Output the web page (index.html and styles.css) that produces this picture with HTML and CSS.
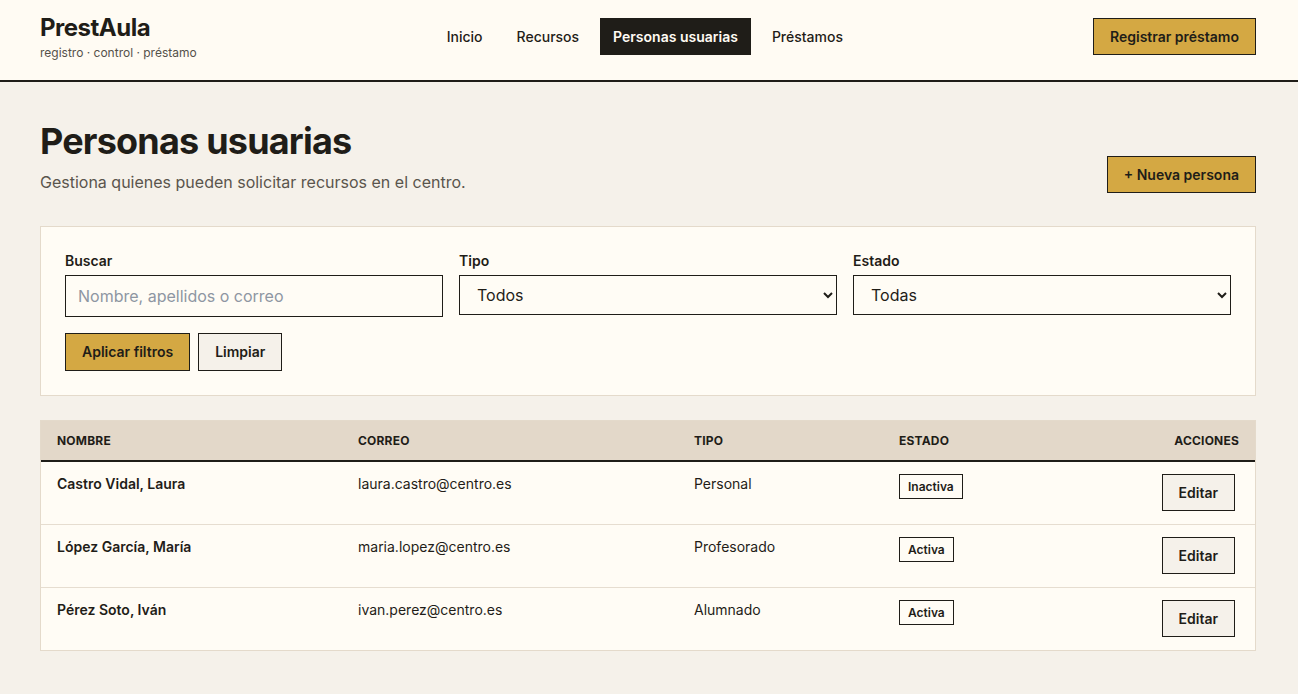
FILE: index.html
```html
<!DOCTYPE html>
<html lang="es">
<head>
<meta charset="utf-8">
<title>PrestAula · Personas usuarias</title>
<link rel="stylesheet" href="styles.css">
</head>
<body>
<header class="topbar">
  <div class="brand">
    <div class="brand-name">PrestAula</div>
    <div class="brand-sub">registro · control · préstamo</div>
  </div>
  <nav class="nav">
    <a class="nav-link" href="#">Inicio</a>
    <a class="nav-link" href="#">Recursos</a>
    <a class="nav-link active" href="#">Personas usuarias</a>
    <a class="nav-link" href="#">Préstamos</a>
  </nav>
  <button class="btn btn-primary">Registrar préstamo</button>
</header>

<main class="main">
  <section class="page-head">
    <div>
      <h1 class="page-title">Personas usuarias</h1>
      <p class="page-desc">Gestiona quienes pueden solicitar recursos en el centro.</p>
    </div>
    <button class="btn btn-primary">+ Nueva persona</button>
  </section>

  <section class="filters">
    <div class="filter-grid">
      <label class="field">
        <span class="field-label">Buscar</span>
        <input class="input" type="text" placeholder="Nombre, apellidos o correo">
      </label>
      <label class="field">
        <span class="field-label">Tipo</span>
        <select class="select"><option>Todos</option></select>
      </label>
      <label class="field">
        <span class="field-label">Estado</span>
        <select class="select"><option>Todas</option></select>
      </label>
    </div>
    <div class="filter-actions">
      <button class="btn btn-primary btn-md">Aplicar filtros</button>
      <button class="btn btn-secondary btn-md">Limpiar</button>
    </div>
  </section>

  <section class="table-wrap">
    <table class="table">
      <thead>
        <tr>
          <th class="c-name">Nombre</th>
          <th class="c-mail">Correo</th>
          <th class="c-type">Tipo</th>
          <th class="c-state">Estado</th>
          <th class="c-act">Acciones</th>
        </tr>
      </thead>
      <tbody>
        <tr>
          <td class="name">Castro Vidal, Laura</td>
          <td>laura.castro@centro.es</td>
          <td>Personal</td>
          <td><span class="badge">Inactiva</span></td>
          <td class="c-act"><button class="btn btn-secondary btn-edit">Editar</button></td>
        </tr>
        <tr>
          <td class="name">López García, María</td>
          <td>maria.lopez@centro.es</td>
          <td>Profesorado</td>
          <td><span class="badge">Activa</span></td>
          <td class="c-act"><button class="btn btn-secondary btn-edit">Editar</button></td>
        </tr>
        <tr>
          <td class="name">Pérez Soto, Iván</td>
          <td>ivan.perez@centro.es</td>
          <td>Alumnado</td>
          <td><span class="badge">Activa</span></td>
          <td class="c-act"><button class="btn btn-secondary btn-edit">Editar</button></td>
        </tr>
      </tbody>
    </table>
  </section>
</main>
</body>
</html>
```

FILE: styles.css
```css
* { box-sizing: border-box; }

html, body {
  margin: 0;
  padding: 0;
}

body {
  font-family: Inter, "Noto Sans", "Liberation Sans", sans-serif;
  background: #f5f1ea;
  color: #1f1d18;
  font-size: 14px;
}

/* Header */
.topbar {
  display: flex;
  align-items: center;
  justify-content: space-between;
  padding: 14px 42px 21px 40px;
  background: #fffbf3;
  border-bottom: 2px solid #1f1d18;
  height: 82px;
}

.brand {
  margin-top: 4px;
}

.brand-name {
  font-size: 24px;
  line-height: 24px;
  font-weight: 700;
  letter-spacing: -0.5px;
}

.brand-sub {
  margin-top: 5px;
  font-size: 12px;
  line-height: 16px;
  color: #55514a;
}

.nav {
  display: flex;
  gap: 8px;
}

.nav-link {
  display: block;
  padding: 9px 13px;
  line-height: 19px;
  font-size: 14px;
  font-weight: 500;
  color: #1f1d18;
  text-decoration: none;
}

.nav-link.active {
  background: #1f1d18;
  color: #fffbf3;
  font-weight: 600;
}

/* Buttons */
.btn {
  font-family: inherit;
  font-size: 14px;
  font-weight: 600;
  line-height: 19px;
  padding: 8px 16px;
  border: 1px solid #1f1d18;
  color: #1f1d18;
  border-radius: 0;
  cursor: pointer;
}

.btn-primary { background: #d4a843; }
.btn-secondary { background: #f5f1ea; }

.btn-md {
  padding: 9px 16px;
  line-height: 18px;
}

/* Page heading */
.main {
  padding: 0 42px 40px 40px;
}

.page-head {
  display: flex;
  align-items: flex-end;
  justify-content: space-between;
  padding-top: 37px;
}

.page-title {
  margin: 0;
  font-size: 36px;
  line-height: 44px;
  font-weight: 700;
  letter-spacing: -0.8px;
}

.page-desc {
  margin: 8px 0 0;
  font-size: 16px;
  line-height: 22px;
  color: #5a554d;
}

/* Filters */
.filters {
  margin-top: 33px;
  background: #fffcf5;
  border: 1px solid #e4dacb;
  padding: 24px;
}

.filter-grid {
  display: grid;
  grid-template-columns: repeat(3, 1fr);
  gap: 16px;
}

.field {
  display: flex;
  flex-direction: column;
}

.field-label {
  font-size: 14px;
  line-height: 20px;
  font-weight: 600;
  margin-bottom: 4px;
}

.input {
  font-family: inherit;
  font-size: 16px;
  height: 42px;
  padding: 0 12px;
  border: 1px solid #1f1d18;
  background: #fffcf5;
  color: #1f1d18;
  border-radius: 0;
  outline: none;
}

.input::placeholder { color: #8e96a2; }

.select {
  font-family: inherit;
  font-size: 16px;
  height: 40px;
  padding: 0 10px 0 13px;
  border: 1px solid #1f1d18;
  background-color: #fffcf5;
  color: #1f1d18;
  border-radius: 0;
}

.filter-actions {
  display: flex;
  gap: 8px;
  margin-top: 16px;
}

/* Table */
.table-wrap {
  margin-top: 24px;
  background: #fffcf5;
  border: 1px solid #e4dacb;
}

.table {
  width: 100%;
  border-collapse: collapse;
  table-layout: fixed;
}

.table th {
  background: #e3d8c9;
  text-align: left;
  font-size: 12px;
  font-weight: 700;
  text-transform: uppercase;
  letter-spacing: 0.2px;
  padding: 11px 16px 11px;
  line-height: 17px;
  border-bottom: 2px solid #1f1d18;
}

.c-name { width: 301px; }
.c-mail { width: 336px; }
.c-type { width: 205px; }
.c-state { width: 200px; }

.table th.c-act,
.table td.c-act { text-align: right; }

.table td {
  padding: 12px 16px 13px;
  font-size: 14px;
  line-height: 20px;
  vertical-align: top;
  border-bottom: 1px solid #e6ddd0;
}

.table tbody tr:last-child td { border-bottom: none; }

.table td.name { font-weight: 600; }

.badge {
  display: inline-block;
  font-size: 12px;
  font-weight: 600;
  line-height: 15px;
  padding: 4px 8px;
  border: 1px solid #1f1d18;
  background: #fffcf5;
}

.btn-edit {
  padding: 8px 16px;
  margin-right: 4px;
}
```
